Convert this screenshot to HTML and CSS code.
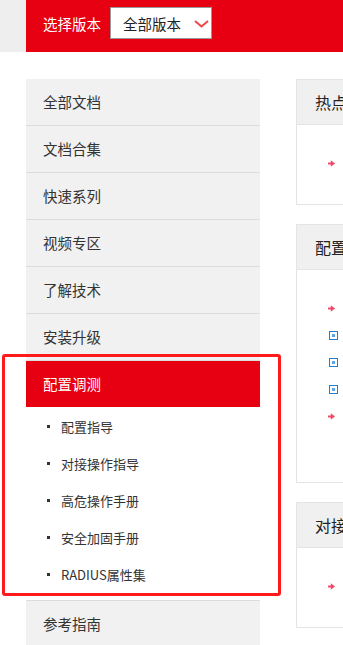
FILE: index.html
```html
<!DOCTYPE html>
<html lang="zh-CN">
<head>
<meta charset="utf-8">
<title>文档中心</title>
<link rel="stylesheet" href="styles.css">
</head>
<body>
<div class="topbar">
  <div class="topbar-inner">
    <span class="ver-label">选择版本</span>
    <div class="ver-select">
      <span>全部版本</span>
      <svg class="chev" width="15" height="8" viewBox="0 0 15 8"><path d="M1 1 L7.5 6.5 L14 1" fill="none" stroke="#f2454a" stroke-width="2"/></svg>
    </div>
  </div>
</div>

<div class="main">
  <nav class="sidebar">
    <div class="nav-item">全部文档</div>
    <div class="nav-item">文档合集</div>
    <div class="nav-item">快速系列</div>
    <div class="nav-item">视频专区</div>
    <div class="nav-item">了解技术</div>
    <div class="nav-item">安装升级</div>
    <div class="nav-item active">配置调测</div>
    <ul class="sub-list">
      <li>配置指导</li>
      <li>对接操作指导</li>
      <li>高危操作手册</li>
      <li>安全加固手册</li>
      <li>RADIUS属性集</li>
    </ul>
    <div class="nav-item top-line">参考指南</div>
  </nav>

  <div class="content">
    <section class="panel">
      <div class="panel-head">热点文档</div>
      <ul class="panel-body">
        <li><svg class="ico-arrow" width="7" height="7" viewBox="0 0 7 7"><path d="M0 3.5h4" stroke="#f04a68" stroke-width="2"/><path d="M2.8 0.2 L7 3.5 L2.8 6.8z" fill="#f04a68"/></svg><span class="tag">新</span><span class="txt">产品文档更新说明</span></li>
      </ul>
    </section>

    <section class="panel">
      <div class="panel-head">配置调测</div>
      <ul class="panel-body tall">
        <li><svg class="ico-arrow" width="7" height="7" viewBox="0 0 7 7"><path d="M0 3.5h4" stroke="#f04a68" stroke-width="2"/><path d="M2.8 0.2 L7 3.5 L2.8 6.8z" fill="#f04a68"/></svg><span class="tag">新</span><span class="txt">配置指导</span></li>
        <li><span class="ico-box"></span><span class="tag">新</span><span class="txt">配置指导合集</span></li>
        <li><span class="ico-box"></span><span class="tag">新</span><span class="txt">典型配置举例</span></li>
        <li><span class="ico-box"></span><span class="tag">新</span><span class="txt">命令参考</span></li>
        <li class="wrap"><svg class="ico-arrow" width="7" height="7" viewBox="0 0 7 7"><path d="M0 3.5h4" stroke="#f04a68" stroke-width="2"/><path d="M2.8 0.2 L7 3.5 L2.8 6.8z" fill="#f04a68"/></svg><span class="txt2"><span class="dot">·</span>更多<br><span class="red">[</span>查看</span></li>
      </ul>
    </section>

    <section class="panel">
      <div class="panel-head">对接操作指导</div>
      <ul class="panel-body">
        <li><svg class="ico-arrow" width="7" height="7" viewBox="0 0 7 7"><path d="M0 3.5h4" stroke="#f04a68" stroke-width="2"/><path d="M2.8 0.2 L7 3.5 L2.8 6.8z" fill="#f04a68"/></svg><span class="tag">新</span><span class="txt">对接操作指导</span></li>
      </ul>
    </section>
  </div>
</div>

<div class="mark"></div>
</body>
</html>
```

FILE: styles.css
```css
html, body {
  margin: 0;
  padding: 0;
  overflow: hidden;
  background: #fff;
}
body {
  font-family: "Noto Sans CJK SC", "Microsoft YaHei", sans-serif;
  color: #333;
  width: 343px;
  height: 645px;
  position: relative;
}
ul { margin: 0; padding: 0; list-style: none; }

.topbar {
  display: flex;
  background: #eeeeee;
  padding-left: 26px;
}
.topbar-inner {
  flex: 1;
  height: 52px;
  background: #e60012;
  display: flex;
  align-items: flex-start;
  padding-left: 17px;
}
.ver-label {
  color: #fff;
  font-size: 14.5px;
  line-height: 20px;
  margin-top: 14px;
}
.ver-select {
  margin-left: 9px;
  margin-top: 7px;
  width: 100px;
  height: 30px;
  background: #fff;
  border: 1px solid #999;
  display: flex;
  align-items: center;
  justify-content: space-between;
  box-sizing: content-box;
  font-size: 14.5px;
  color: #222;
}
.ver-select span { padding-left: 12px; line-height: 20px; margin-top: 2px; }
.chev { margin-right: 2px; margin-top: 1px; }

.main {
  display: flex;
  padding-top: 27px;
  padding-left: 26px;
  overflow: hidden;
}
.sidebar {
  flex: 0 0 234px;
  width: 234px;
}
.nav-item {
  height: 46px;
  line-height: 46px;
  background: #f1f1f1;
  border-bottom: 1px solid #dcdcdc;
  padding-left: 17px;
  font-size: 14.5px;
  color: #333;
}
.nav-item.active {
  background: #e60012;
  color: #fff;
  border-bottom: none;
}
.nav-item.top-line {
  border-top: 1px solid #dcdcdc;
  border-bottom: none;
}
.sub-list {
  background: #fff;
  padding: 1px 0 7px 0;
}
.sub-list li {
  height: 37px;
  line-height: 37px;
  font-size: 13px;
  color: #333;
  padding-left: 35px;
  position: relative;
}
.sub-list li::before {
  content: "";
  position: absolute;
  left: 21px;
  top: 17px;
  width: 3px;
  height: 3px;
  background: #333;
}

.content {
  flex: 0 0 400px;
  margin-left: 36px;
}
.panel {
  border: 1px solid #e4e4e4;
  margin-bottom: 19px;
  background: #fff;
}
.panel-head {
  height: 44px;
  line-height: 44px;
  background: #f0f0f0;
  border-bottom: 1px solid #e4e4e4;
  padding-left: 18px;
  font-size: 16px;
  color: #222;
  white-space: nowrap;
}
.panel-body {
  padding: 25px 0 27px 31px;
  font-size: 13px;
}
.panel-body.tall {
  padding-bottom: 25px;
}
.panel-body li {
  height: 27px;
  line-height: 27px;
  display: flex;
  align-items: center;
  white-space: nowrap;
}
.panel-body li.wrap {
  height: 54px;
  align-items: flex-start;
}
.panel-body li.wrap .ico-arrow { margin-top: 10px; }
.ico-arrow { flex: 0 0 7px; }
.ico-box {
  flex: 0 0 9px;
  width: 9px;
  height: 9px;
  box-sizing: border-box;
  border: 1px solid #1f7fd1;
  margin-left: 1px;
  margin-right: -1px;
  position: relative;
}
.ico-box::after {
  content: "";
  position: absolute;
  left: 2px;
  top: 2px;
  width: 3px;
  height: 3px;
  background: #5aa6e8;
}
.tag {
  margin-left: 8px;
  background: #ffd58f;
  color: #a0600a;
  font-size: 11px;
  line-height: 14px;
  height: 14px;
  padding: 0 3px;
}
.txt { margin-left: 6px; color: #333; }
.txt2 { margin-left: 8px; color: #333; line-height: 27px; }
.dot { color: #7a3c8c; }
.red { color: #e60012; }

.mark {
  position: absolute;
  left: 2px;
  top: 354px;
  width: 273px;
  height: 236px;
  border: 3px solid #fe1a1a;
  border-radius: 3px;
  pointer-events: none;
}
```
